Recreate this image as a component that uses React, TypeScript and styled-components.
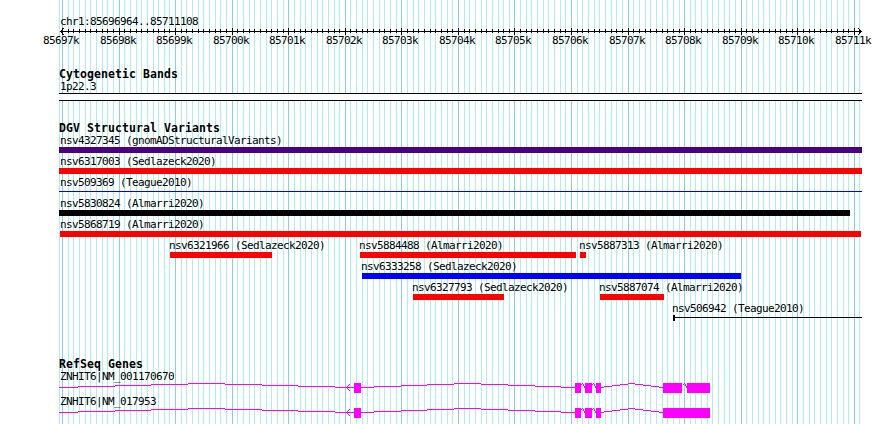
import React from "react";
import styled, { createGlobalStyle } from "styled-components";

const GlobalStyle = createGlobalStyle`
  body {
    margin: 0;
    background: #fff;
  }
`;

const LEFT = 59;
const RIGHT = 862;
const HEIGHT = 424;
const START = 85696964;
const PX_PER_BASE = 800 / 14145;

const toPixel = (base: number) => Math.round(60 + (base - START) * PX_PER_BASE);

const Panel = styled.main`
  position: relative;
  width: 890px;
  height: ${HEIGHT}px;
  overflow: hidden;
  color: #000;
  font-family: "DejaVu Sans Mono", "Liberation Mono", monospace;
`;

const Backdrop = styled.svg`
  position: absolute;
  inset: 0;
  z-index: -1;
`;

const Drawing = styled.svg`
  display: block;
  shape-rendering: crispEdges;
`;

const Header = styled.header`
  box-sizing: border-box;
  height: 68px;
  padding-top: 16px;
`;

const Text = styled.div<{ $x?: number }>`
  margin-left: ${({ $x = 60 }) => $x}px;
  height: 12px;
  font-size: 11px;
  line-height: 12px;
  letter-spacing: -0.622px;
  white-space: pre;
`;

const TickLabels = styled.div`
  display: grid;
`;

const TickLabel = styled(Text)`
  grid-area: 1 / 1;
`;

const Track = styled.section<{ $height: number }>`
  height: ${({ $height }) => $height}px;
`;

const TrackTitle = styled.h2`
  margin: 0 0 1px ${LEFT}px;
  height: 12px;
  font-size: 11.5px;
  font-weight: bold;
  line-height: 12px;
  letter-spacing: 0.077px;
  white-space: pre;
`;

const Band = styled.div`
  width: ${RIGHT - LEFT}px;
  height: 6px;
  margin-left: ${LEFT}px;
  border: solid #000;
  border-width: 1px 0;
  background: #fff;
`;

const VariantRow = styled.div`
  display: grid;
  height: 21px;
`;

const Variant = styled.div`
  grid-area: 1 / 1;
`;

const VariantBar = styled.div<{ $from: number; $to: number; $color: string }>`
  width: ${({ $from, $to }) => $to - $from}px;
  height: 6px;
  margin-left: ${({ $from }) => $from}px;
  background: ${({ $color }) => $color};
`;

const VariantLine = styled(VariantBar)<{ $capped?: boolean }>`
  height: 1px;
  margin-top: 2px;

  &::before {
    content: "";
    display: ${({ $capped }) => ($capped ? "block" : "none")};
    width: 2px;
    height: 6px;
    background: inherit;
    transform: translateY(-2px);
  }
`;

const Gene = styled.div`
  height: 25px;
`;

type VariantData = {
  name: string;
  from: number;
  to: number;
  color: string;
  line?: boolean;
  capped?: boolean;
};

const variantRows: VariantData[][] = [
  [{ name: "nsv4327345 (gnomADStructuralVariants)", from: 59, to: 862, color: "#4b0082" }],
  [{ name: "nsv6317003 (Sedlazeck2020)", from: 59, to: 862, color: "#f00" }],
  [{ name: "nsv509369 (Teague2010)", from: 59, to: 862, color: "#00f", line: true }],
  [{ name: "nsv5830824 (Almarri2020)", from: 59, to: 850, color: "#000" }],
  [{ name: "nsv5868719 (Almarri2020)", from: 60, to: 861, color: "#f00" }],
  [
    { name: "nsv6321966 (Sedlazeck2020)", from: 170, to: 272, color: "#f00" },
    { name: "nsv5884488 (Almarri2020)", from: 360, to: 576, color: "#f00" },
    { name: "nsv5887313 (Almarri2020)", from: 580, to: 586, color: "#f00" },
  ],
  [{ name: "nsv6333258 (Sedlazeck2020)", from: 362, to: 741, color: "#00f" }],
  [
    { name: "nsv6327793 (Sedlazeck2020)", from: 413, to: 504, color: "#f00" },
    { name: "nsv5887074 (Almarri2020)", from: 600, to: 664, color: "#f00" },
  ],
  [{ name: "nsv506942 (Teague2010)", from: 673, to: 862, color: "#000", line: true, capped: true }],
];

// Each tick is 100 bases, every tenth one is a major tick
const ticks = Array.from({ length: 142 }, (_, i) => ({
  x: toPixel(85697000 + i * 100),
  major: i % 10 === 0,
  label: `${85697 + i / 10}k`,
}));

const Grid = () => (
  <Backdrop width={890} height={HEIGHT} shapeRendering="crispEdges">
    <rect x={LEFT} width={1} height={HEIGHT} fill="#afeeee" />
    {ticks.map(({ x, major }) => (
      <rect key={x} x={x} width={1} height={HEIGHT} fill={major ? "#87ceeb" : "#afeeee"} />
    ))}
  </Backdrop>
);

const Ruler = () => (
  <Drawing width={890} height={7}>
    <rect x={60} y={3} width={802} height={1} />
    {ticks.map(({ x, major }) => (
      <rect key={x} x={x} y={major ? 0 : 1} width={1} height={major ? 7 : 4} />
    ))}
    {[1, 2, 3].map((n) => (
      <g key={n}>
        <rect x={60 + n} y={3 - n} width={1} height={1} />
        <rect x={60 + n} y={3 + n} width={1} height={1} />
        <rect x={861 - n} y={3 - n} width={1} height={1} />
        <rect x={861 - n} y={3 + n} width={1} height={1} />
      </g>
    ))}
  </Drawing>
);

// Runs of an intron as [from, to, y]
const introns = [
  [59, 78, 4], [78, 115, 3], [115, 151, 2], [151, 188, 1], [188, 225, 0],
  [225, 262, 1], [262, 298, 2], [298, 335, 3], [335, 354, 4],
  [361, 374, 4], [374, 401, 3], [401, 427, 2], [427, 454, 1], [454, 481, 0],
  [481, 508, 1], [508, 535, 2], [535, 561, 3], [561, 575, 4],
  [601, 604, 4], [604, 612, 3], [612, 620, 2], [620, 628, 1], [628, 635, 0],
  [635, 643, 1], [643, 651, 2], [651, 659, 3], [659, 663, 4],
];

const sharedExons = [[354, 361], [575, 581], [585, 592], [596, 601]];

const genes = [
  { name: "ZNHIT6|NM_001170670", exons: [...sharedExons, [663, 682], [687, 710]], gaps: [581, 592, 683] },
  { name: "ZNHIT6|NM_017953", exons: [...sharedExons, [663, 710]], gaps: [581, 592] },
];

const GeneModel = ({ exons, gaps }: { exons: number[][]; gaps: number[] }) => (
  <Drawing width={890} height={11} fill="#f0f">
    {introns.map(([from, to, y]) => (
      <rect key={from} x={from} y={y} width={to - from} height={1} />
    ))}
    {exons.map(([from, to]) => (
      <rect key={from} x={from} y={0} width={to - from} height={10} />
    ))}
    {gaps.map((x) => (
      <g key={x}>
        <rect x={x} y={1} width={1} height={1} />
        <rect x={x + 1} y={0} width={1} height={1} />
        <rect x={x + 2} y={1} width={1} height={2} />
        <rect x={x + 3} y={3} width={1} height={2} />
      </g>
    ))}
    {[-3, -2, -1, 0, 1, 2, 3].map((n) => (
      <rect key={n} x={346 + Math.abs(n)} y={4 + n} width={1} height={1} />
    ))}
  </Drawing>
);

export default function App() {
  return (
    <>
      <GlobalStyle />
      <Panel>
        <Grid />
        <Header>
          <Text>chr1:85696964..85711108</Text>
          <Ruler />
          <TickLabels>
            {ticks.filter((tick) => tick.major).map(({ x, label }) => (
              <TickLabel key={x} $x={x - 19}>{label}</TickLabel>
            ))}
          </TickLabels>
        </Header>
        <Track $height={54}>
          <TrackTitle>Cytogenetic Bands</TrackTitle>
          <Text>1p22.3</Text>
          <Band />
        </Track>
        <Track $height={236}>
          <TrackTitle>DGV Structural Variants</TrackTitle>
          {variantRows.map((row) => (
            <VariantRow key={row[0].name}>
              {row.map(({ name, from, to, color, line, capped }) => (
                <Variant key={name}>
                  <Text $x={Math.max(from - 1, 60)}>{name}</Text>
                  {line ? (
                    <VariantLine $from={from} $to={to} $color={color} $capped={capped} />
                  ) : (
                    <VariantBar $from={from} $to={to} $color={color} />
                  )}
                </Variant>
              ))}
            </VariantRow>
          ))}
        </Track>
        <Track $height={66}>
          <TrackTitle>RefSeq Genes</TrackTitle>
          {genes.map(({ name, exons, gaps }) => (
            <Gene key={name}>
              <Text>{name}</Text>
              <GeneModel exons={exons} gaps={gaps} />
            </Gene>
          ))}
        </Track>
      </Panel>
    </>
  );
}
